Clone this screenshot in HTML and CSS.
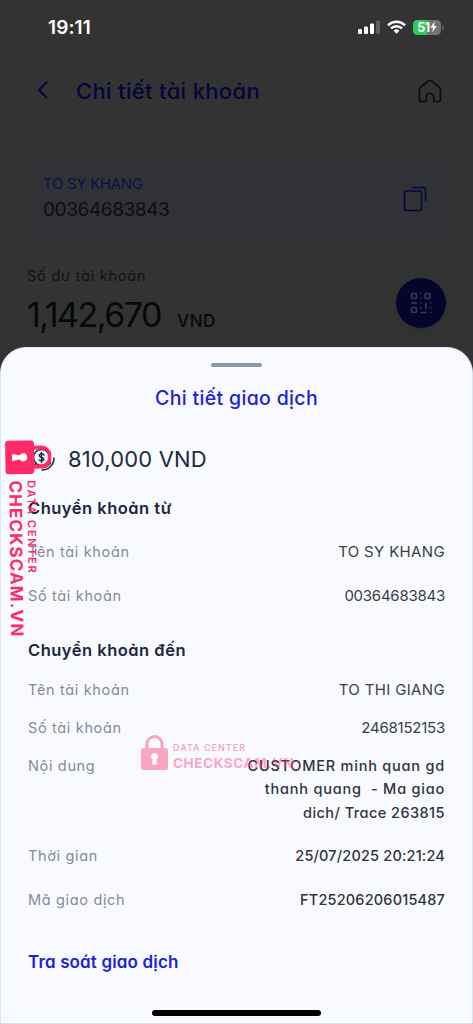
FILE: index.html
```html
<!DOCTYPE html>
<html lang="vi">
<head>
<meta charset="utf-8">
<title>Chi tiết giao dịch</title>
<link rel="stylesheet" href="styles.css">
</head>
<body>
<div class="screen">
  <div class="status">
    <span class="clock">19:11</span>
    <div class="indicators">
      <svg class="signal" width="22" height="15" viewBox="0 0 22 15"><g fill="#fff"><rect x="0" y="9" width="4" height="5" rx="1.3"/><rect x="6" y="6.5" width="4" height="7.5" rx="1.3"/><rect x="12" y="3.5" width="4" height="10.500" rx="1.3"/></g><rect x="18" y="0.500" width="4" height="13.500" rx="1.3" fill="#5d5d5d"/></svg>
      <svg class="wifi" width="19" height="14" viewBox="0 0 19 14" fill="none" stroke="#fff" stroke-width="2.500"><path d="M1 5.300a12.200 12.200 0 0 1 17 0"/><path d="M4 8.400a7.900 7.900 0 0 1 11 0"/><path d="M6.600 10.800a4.100 4.100 0 0 1 5.800 0l-2.900 2.900z" fill="#fff" stroke="none"/></svg>
      <div class="battery"><span class="level">51</span><svg width="7" height="12" viewBox="0 0 7 12"><path d="M4.600 0.500L0.300 6.700h2.700L2.200 11.500l4.500-6.400H4z" fill="#fff"/></svg></div>
      <span class="battery-tip"></span>
    </div>
  </div>
  <div class="nav">
    <svg class="back" width="12" height="18" viewBox="0 0 12 18" fill="none" stroke="#06063c" stroke-width="2" stroke-linecap="round" stroke-linejoin="round"><path d="M9.500 1.500L2 9l7.500 7.500"/></svg>
    <h1 class="nav-title">Chi tiết tài khoản</h1>
    <svg width="24" height="24" viewBox="0 0 24 24" fill="none" stroke="#0c0e14" stroke-width="1.700" stroke-linejoin="round"><path d="M1.500 10.500Q1.500 9.300 2.500 8.400L10.300 2Q12 0.600 13.700 2L21.500 8.400Q22.500 9.300 22.500 10.500V20.500Q22.500 22.500 20.500 22.500H17.500Q15.700 22.500 15.700 20.700V18A3.700 3.700 0 0 0 8.300 18V20.700Q8.300 22.500 6.500 22.500H3.500Q1.500 22.500 1.500 20.500Z"/></svg>
  </div>
  <div class="account">
    <div class="account-text">
      <div class="owner">TO SY KHANG</div>
      <div class="number">00364683843</div>
    </div>
    <svg width="24" height="26" viewBox="0 0 24 26" fill="none" stroke="#06063c" stroke-width="1.600" stroke-linecap="round"><rect x="1.500" y="5" width="17" height="19.500" rx="1.500"/><path d="M9.500 1.500H20Q22.500 1.500 22.500 4V15"/></svg>
  </div>
  <div class="balance">
    <div>
      <div class="balance-label">Số dư tài khoản</div>
      <div class="balance-row"><span class="balance-value">1,142,670</span><span class="currency">VND</span></div>
    </div>
    <div class="qr">
      <svg width="22" height="22" viewBox="0 0 22 22" fill="none" stroke="#3b3b4d" stroke-width="1.600"><rect x="1.500" y="1.500" width="5" height="5" rx="1"/><rect x="15" y="1.500" width="5" height="5" rx="1"/><rect x="1.500" y="15.500" width="5" height="5" rx="1"/><path d="M1 11H7M15.800 11V17M10.500 20.500H16.500M10 1h1.500M10 6h1.500M10 11h1.500M10 16h1.500M20 11h1.300M20 16h1.300M20 20.500h1.300"/></svg>
    </div>
  </div>

  <div class="sheet">
    <div class="handle"></div>
    <h2 class="sheet-title">Chi tiết giao dịch</h2>
    <div class="amount">
      <svg width="28" height="28" viewBox="0 0 28 28" fill="none" stroke="#20263c" stroke-width="1.500" stroke-linecap="round"><circle cx="13.500" cy="12.500" r="8"/><path d="M26 13A12 12 0 0 1 14 25M22.500 18A11 11 0 0 1 15 22.500M8 18L5.500 21.500"/><path d="M16 10Q13.500 7.800 11.500 9.700C10 12.500 16 11.800 15.800 14.500Q14 17 11.200 15M13.500 7.500V17.500"/></svg>
      <span>810,000 VND</span>
    </div>
    <h3 class="section from">Chuyển khoản từ</h3>
    <div class="row r1"><span class="label">Tên tài khoản</span><span class="value name">TO SY KHANG</span></div>
    <div class="row r2"><span class="label">Số tài khoản</span><span class="value">00364683843</span></div>
    <h3 class="section to">Chuyển khoản đến</h3>
    <div class="row r3"><span class="label">Tên tài khoản</span><span class="value name">TO THI GIANG</span></div>
    <div class="row r4"><span class="label">Số tài khoản</span><span class="value">2468152153</span></div>
    <div class="row r5"><span class="label">Nội dung</span><span class="value note">CUSTOMER minh quan gd<br>thanh quang&nbsp; - Ma giao<br><span class="note-end">dich/ Trace 263815</span></span></div>
    <div class="row r6"><span class="label">Thời gian</span><span class="value strong">25/07/2025 20:21:24</span></div>
    <div class="row r7"><span class="label">Mã giao dịch</span><span class="value strong">FT25206206015487</span></div>
    <a class="trace">Tra soát giao dịch</a>
    <div class="home-bar"></div>
  </div>

  <div class="mark mark-side">
    <svg width="34" height="46" viewBox="0 0 34 46"><path d="M7.500 18V10.500a9.500 9.500 0 0 1 19 0V18" fill="none" stroke="currentColor" stroke-width="4"/><rect y="17" width="34" height="29" rx="4" fill="currentColor"/><path d="M17 24a4 4 0 0 1 2.200 7.400L20.500 39h-7l1.300-7.600A4 4 0 0 1 17 24z" fill="#fff"/></svg>
    <div class="mark-text"><span class="mark-small">DATA CENTER</span><span class="mark-big">CHECKSCAM.VN</span></div>
  </div>
  <div class="mark mark-center">
    <svg width="27" height="35" viewBox="0 0 27 35"><path d="M6 14V9a7.500 7.500 0 0 1 15 0v5" fill="none" stroke="currentColor" stroke-width="3"/><rect y="13" width="27" height="22" rx="2.500" fill="currentColor"/><path d="M13.500 18a3.500 3.500 0 0 1 1.800 6.500l.8 5h-5.200l.8-5A3.500 3.500 0 0 1 13.500 18z" fill="#fff"/></svg>
    <div class="mark-text"><span class="mark-small">DATA CENTER</span><span class="mark-big">CHECKSCAM.VN</span></div>
  </div>
</div>
</body>
</html>
```
FILE: styles.css
```css
* { box-sizing: border-box; }
body { margin: 0; background: #333; }
h1, h2, h3 { margin: 0; }
svg { display: block; flex: none; }
.screen {
  position: relative;
  width: 473px;
  height: 1024px;
  overflow: hidden;
  display: flex;
  flex-direction: column;
  background: linear-gradient(#333 0 240px, #323433 320px, #333 348px);
  font-family: Inter, "Open Sans", sans-serif;
  font-feature-settings: "cv11";
  white-space: nowrap;
}
.status { height: 54px; padding: 0 29px 0 48px; display: flex; justify-content: space-between; align-items: center; }
.clock { color: #fff; font-size: 19px; font-weight: 600; letter-spacing: .1px; }
.indicators { display: flex; align-items: center; }
.wifi { margin-left: 7px; }
.battery {
  width: 28px; height: 15px; margin-left: 7px; border-radius: 4.5px;
  background: linear-gradient(90deg, #34c759 0 51%, #737373 51%);
  display: flex; align-items: center; justify-content: center;
}
.level { color: #fff; font-size: 12.5px; font-weight: 700; letter-spacing: -.5px; }
.battery-tip { width: 2px; height: 5px; margin-left: 1px; border-radius: 0 2px 2px 0; background: #5d5d5d; }
.nav { height: 75px; padding: 0 31px 1px 37px; display: flex; align-items: center; border-bottom: 1px solid #2f2f30; }
.nav-title { flex: 1; margin-left: 27px; color: #06063c; font-size: 22px; font-weight: 500; letter-spacing: .33px; }
.nav .back { margin-top: -2px; }
.account {
  height: 82px; margin: 29px 27px 0; padding: 0 18px 0 15px; border: 1px solid #2c2e39; border-radius: 5px;
  background: #313235; display: flex; align-items: center; justify-content: space-between;
}
.account-text { padding-bottom: 3px; }
.owner { color: #0e0f49; font-size: 15px; line-height: 24px; letter-spacing: -.3px; }
.number { color: #0c0e14; font-size: 19px; line-height: 28px; letter-spacing: -.4px; }
.balance { height: 78px; margin: 24px 27px 0; display: flex; justify-content: space-between; }
.balance-label { color: #111318; font-size: 14.5px; line-height: 24px; letter-spacing: .77px; }
.balance-row { display: flex; align-items: baseline; line-height: 54px; color: #06080e; }
.balance-value { width: 150px; font-size: 34px; letter-spacing: -1.5px; }
.currency { font-size: 17px; font-weight: 500; letter-spacing: .6px; }
.qr {
  width: 50px; height: 50px; margin-top: 14px; border-radius: 50%; background: #05052c;
  display: flex; align-items: center; justify-content: center; box-shadow: 0 2px 8px #2d2d2d;
}
.sheet {
  height: 677px; margin-top: 5px; padding: 0 27px; display: flex; flex-direction: column;
  background: #f8faff; border: 1px solid #d8e4fa; border-radius: 26px 26px 0 0;
}
.handle { width: 51px; height: 4px; margin: 15px auto 0; border-radius: 2px; background: #8995b2; flex: none; }
.sheet-title { margin-top: 16px; text-align: center; color: #1f22d3; font-size: 19.5px; font-weight: 500; line-height: 30px; letter-spacing: .33px; }
.amount { height: 34px; margin-top: 29px; display: flex; align-items: center; gap: 12px; color: #232a40; font-size: 22px; letter-spacing: .15px; }
.section { color: #20263c; font-size: 16.5px; font-weight: 600; line-height: 24px; letter-spacing: .5px; }
.from { margin-top: 20px; }
.to { margin-top: 30px; }
.row { display: flex; justify-content: space-between; font-size: 14.5px; line-height: 24px; }
.r1, .r2, .r7 { margin-top: 20px; }
.r3 { margin-top: 16px; }
.r4 { margin-top: 14px; }
.r5 { margin-top: 14px; }
.r6 { margin-top: 20px; }
.label { color: #858b9c; letter-spacing: .66px; }
.value { color: #3b3e49; font-size: 15px; letter-spacing: -.24px; }
.name { letter-spacing: .35px; }
.note, .strong { color: #30333d; font-size: 14.5px; font-weight: 500; letter-spacing: .18px; }
.note { text-align: right; line-height: 23.33px; letter-spacing: .78px; }
.note-end { letter-spacing: .45px; }
.trace { margin-top: 38px; color: #1f22d3; font-size: 17px; font-weight: 600; line-height: 24px; letter-spacing: .15px; }
.home-bar { width: 169px; height: 6px; margin: 36px auto 0; border-radius: 3px; background: #000; flex: none; }

/* Watermarks lie over the sheet */
.mark { position: absolute; display: flex; color: #ff2b67; font-weight: 700; }
.mark-text { display: flex; flex-direction: column; }
.mark-side { left: 51px; top: 440px; transform-origin: 0 0; transform: rotate(89.4deg); align-items: flex-end; }
.mark-side .mark-text { margin-left: 6px; gap: 1px; padding-bottom: 1px; }
.mark-side .mark-small { font-size: 11px; line-height: 13px; font-weight: 600; letter-spacing: 1.65px; }
.mark-side .mark-big { font-size: 17px; line-height: 17px; letter-spacing: 1.15px; }
.mark-center { left: 141px; top: 735px; opacity: .4; }
.mark-center .mark-text { margin-left: 5px; padding-top: 7px; }
.mark-center .mark-small { font-size: 9px; line-height: 11px; font-weight: 600; letter-spacing: 1px; }
.mark-center .mark-big { margin-top: 2px; font-size: 13.5px; line-height: 17px; letter-spacing: .6px; }
```
